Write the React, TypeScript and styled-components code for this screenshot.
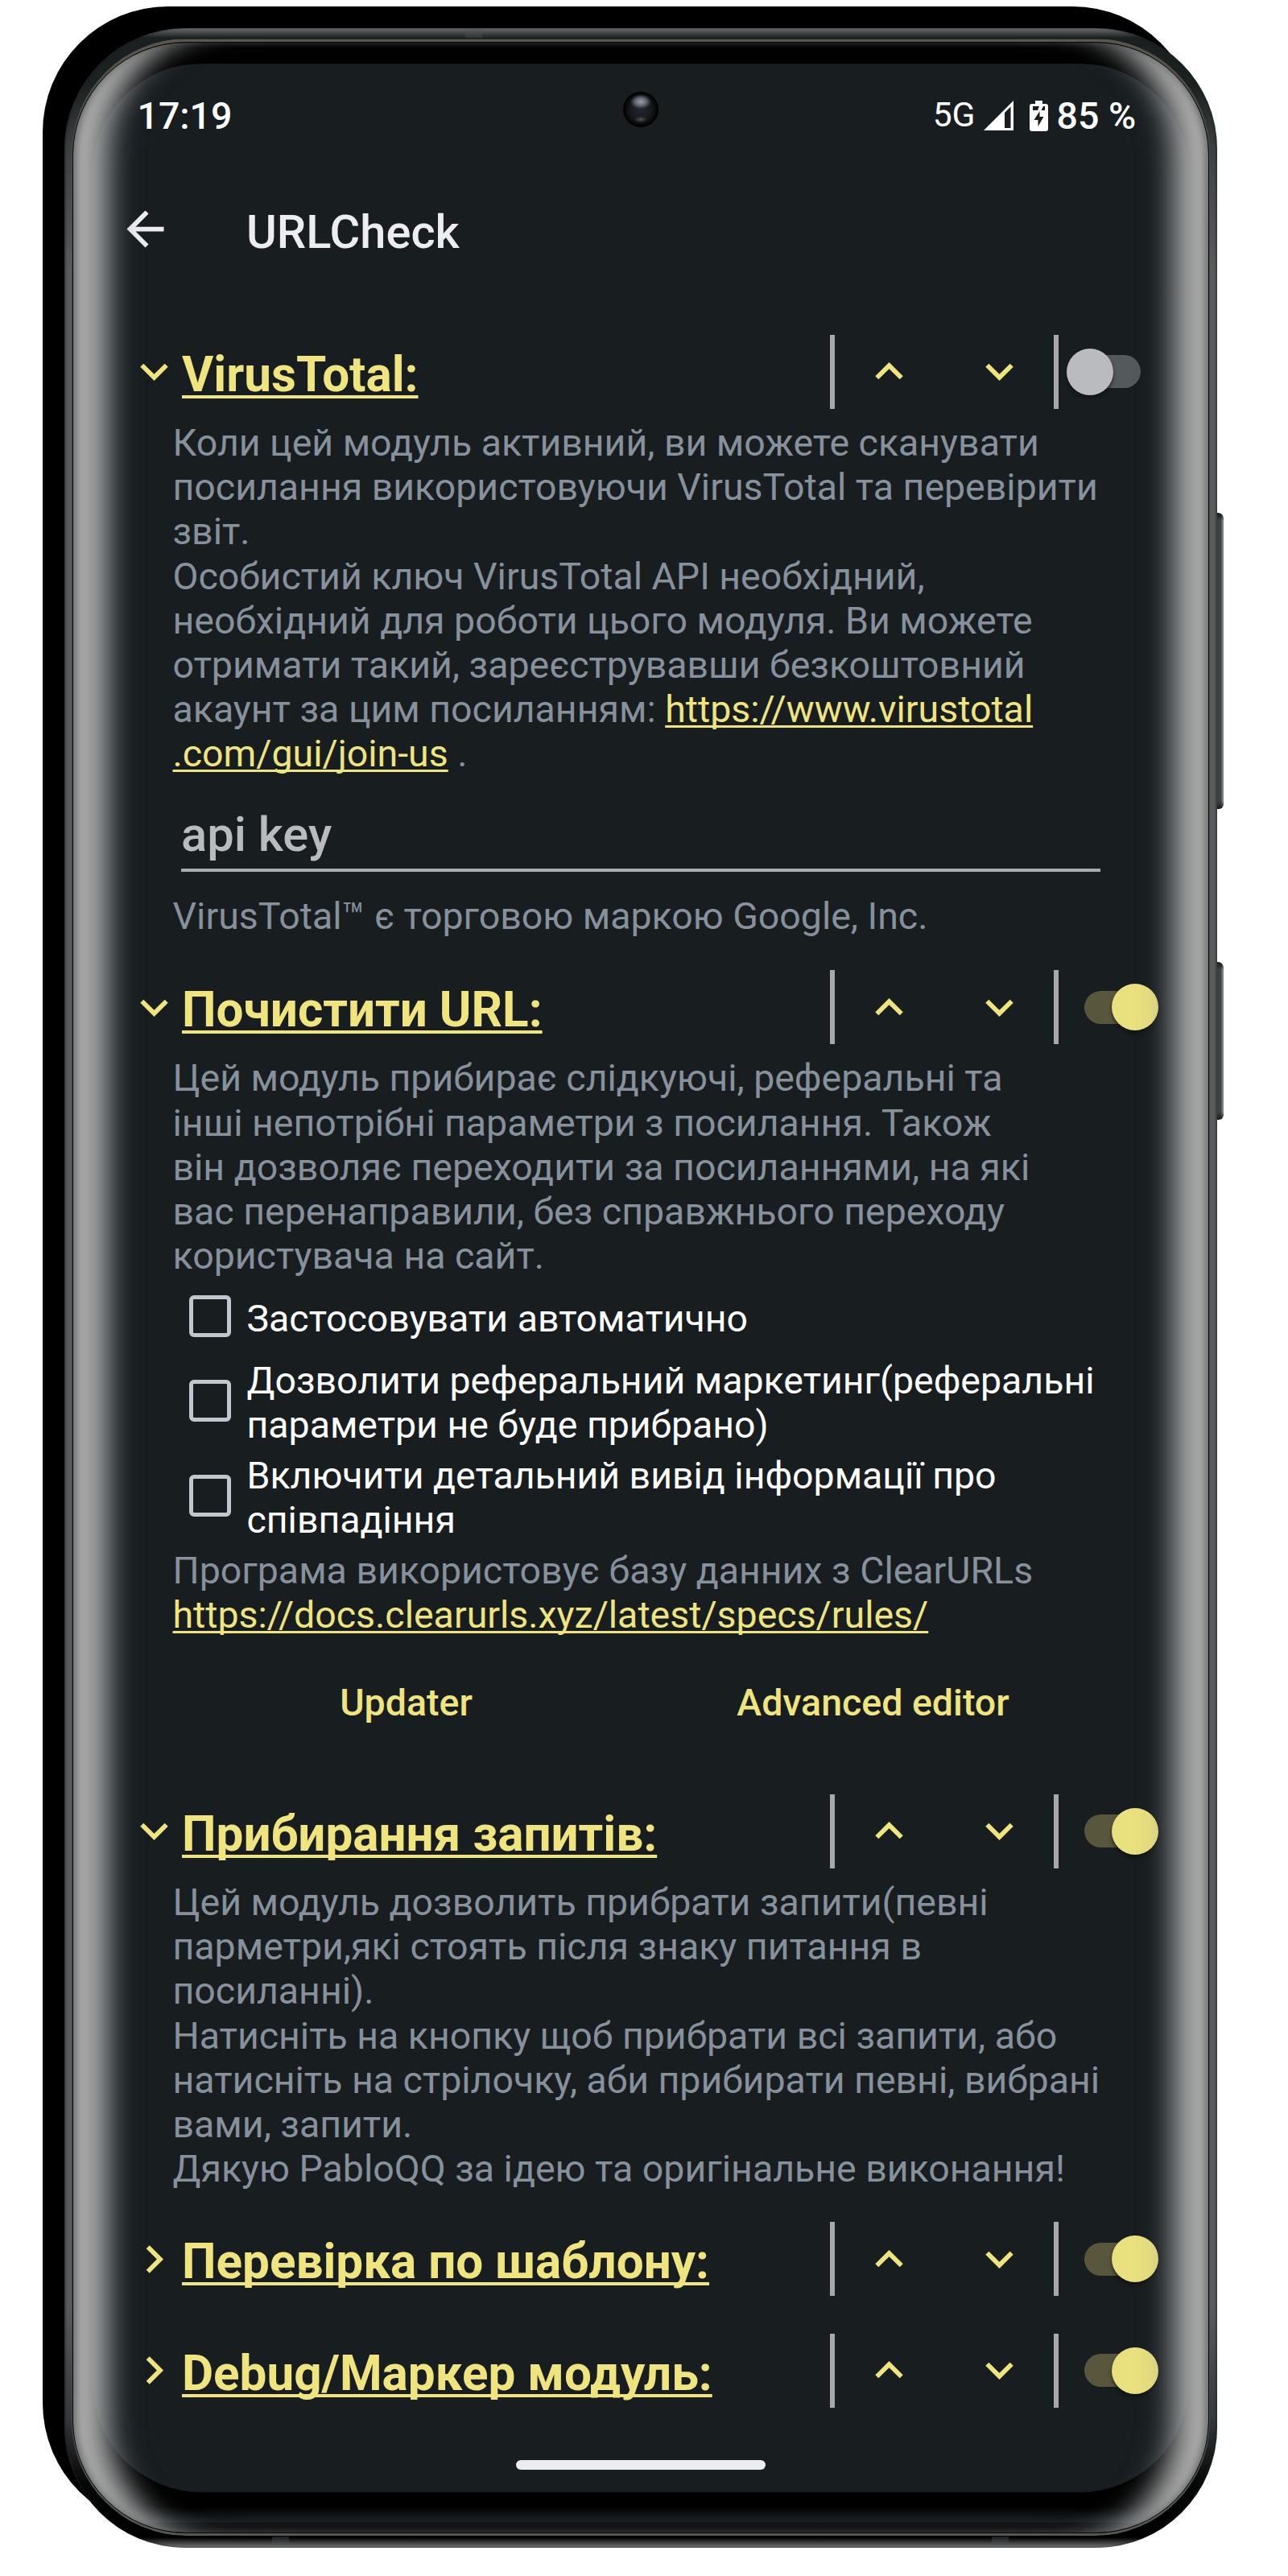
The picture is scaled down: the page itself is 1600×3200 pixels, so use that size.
import React from "react";
import styled, { createGlobalStyle } from "styled-components";

const GlobalStyle = createGlobalStyle`
  * { box-sizing: border-box; }
  html, body { margin: 0; padding: 0; background: #ffffff; }
  body { font-family: Roboto, "Liberation Sans", sans-serif; }
`;

const accent = "#efe47e";
const surface = "#181d20";
const muted = "#87919b";

/* ---------- device ---------- */

const Stage = styled.main`
  position: relative;
  width: 1600px;
  height: 3200px;
  overflow: hidden;
  padding: 35px 0 0 80px;
  background: #ffffff;
`;

const BackPlate = styled.div`
  position: absolute;
  left: 52.5px;
  top: 8px;
  width: 1435px;
  height: 3133px;
  border-radius: 156px;
  background: #000000;
`;

const SideButton = styled.div<{ $top: number; $length: number }>`
  position: absolute;
  left: 1508px;
  top: ${(p) => p.$top}px;
  width: 12px;
  height: ${(p) => p.$length}px;
  border-radius: 0 7px 6px 0;
  background: linear-gradient(180deg, #15191a 0, transparent 10px, transparent calc(100% - 10px), #15191a 100%),
    linear-gradient(90deg, #3d4241 0, #3f4443 9px, #7b7f80 10px, #808486 12px);
`;

const Frame = styled.div`
  position: relative;
  width: 1431.7px;
  height: 3129.5px;
  padding: 12.5px 9px 15px;
  border-radius: 150px;
  background: linear-gradient(
    180deg,
    #6b6e70 0,
    #1a1f20 12px,
    #1b2021 70px,
    #3d4041 150px,
    #5a5b5c 300px,
    #5a5b5c calc(100% - 300px),
    #34383a calc(100% - 160px),
    #050606 calc(100% - 80px),
    #000000 calc(100% - 13px),
    #777777 100%
  );
  box-shadow: inset 2px 0 2px rgba(30, 32, 33, 0.5), inset -2px 0 2px rgba(30, 32, 33, 0.5);
`;

const Antenna = styled.span<{ $left: number; $bottom?: boolean }>`
  position: absolute;
  left: ${(p) => p.$left}px;
  ${(p) => (p.$bottom ? "bottom: 3px;" : "top: 1px;")}
  width: 21px;
  height: 11px;
  background: rgba(78, 80, 82, 0.4);
`;

const Rim = styled.div`
  height: 100%;
  padding: 4px 1px 3px;
  border-radius: 143px;
  background: linear-gradient(180deg, #1a1b1b 0, #5a574f 1.5px, #504e47 60px, #4a4c4c 300px, #4a4c4c calc(100% - 200px), #565852 100%);
`;

const Glass = styled.div`
  position: relative;
  display: flex;
  flex-direction: column;
  height: 100%;
  padding: 26px 24px 0;
  border: 1.5px solid #050606;
  border-radius: 141px;
  overflow: hidden;
  background: #000000;
`;

const EdgeGlow = styled.div`
  position: absolute;
  inset: 0;
  border-radius: 139px;
  pointer-events: none;
  box-shadow: inset 7px 0 10px -3px rgba(70, 72, 74, 0.65), inset -7px 0 10px -3px rgba(70, 72, 74, 0.65),
    inset 67px 0 34px -27px #adadad, inset -67px 0 34px -27px #adadad,
    inset 78px 0 40px -27px rgba(110, 120, 126, 0.3), inset -78px 0 40px -27px rgba(110, 120, 126, 0.3);
`;

const Camera = styled.div`
  position: absolute;
  left: 672.5px;
  top: 51px;
  width: 64px;
  height: 64px;
  padding: 10px;
  border-radius: 50%;
  background: #1a1d1e;
`;

const Lens = styled.div`
  width: 44px;
  height: 44px;
  border-radius: 50%;
  background: radial-gradient(ellipse 13px 9px at 50% 28%, #9a9fa8 0, #666b73 50%, transparent 100%),
    radial-gradient(ellipse 8px 4px at 50% 78%, #50534a 0, transparent 100%),
    radial-gradient(circle at 50% 50%, #22272c 0, #16191c 45%, #000000 68%);
`;

const Chin = styled.div`
  flex: 1;
  margin: 0 -24px;
  background: linear-gradient(180deg, #000000 0, #000000 18px, #1b2125 37px, #121212 38px, #131313 100%);
`;

/* ---------- screen ---------- */

const Screen = styled.div`
  display: flex;
  flex-direction: column;
  height: 3017.5px;
  border-radius: 136px;
  overflow: hidden;
  background: ${surface};
`;

const StatusBar = styled.header`
  display: flex;
  align-items: center;
  justify-content: space-between;
  height: 130px;
  padding: 0 65.5px 0 55.5px;
  color: #ffffff;
  font-size: 46.5px;
  font-weight: 500;
  line-height: 55px;
`;

const StatusText = styled.span`
  padding-top: 2px;
`;

const StatusIcons = styled.div`
  display: flex;
  align-items: center;
`;

const Network = styled.span`
  margin-right: 10px;
  padding-bottom: 2px;
  font-size: 42.5px;
  font-weight: 400;
`;

const AppBar = styled.div`
  display: flex;
  align-items: center;
  height: 158px;
  padding: 0 0 5px 30.5px;
  border-bottom: 1.5px solid #1b1a1c;
`;

const AppTitle = styled.h1`
  margin: 0 0 0 91.5px;
  padding-top: 6px;
  color: #ececf1;
  font-size: 57.8px;
  font-weight: 500;
  line-height: 68px;
`;

const List = styled.div`
  flex: 1;
  padding: 35.3px 97px 0 99.5px;
`;

const Module = styled.section<{ $gap?: number }>`
  margin-top: ${(p) => p.$gap ?? 0}px;
`;

const ModuleHeader = styled.div`
  display: flex;
  align-items: center;
  height: 120px;
  margin: 0 -97px 0 -57.5px;
`;

const ModuleTitle = styled.h2`
  flex: none;
  width: 804.7px;
  margin: 0;
  padding-top: 8px;
  color: ${accent};
  font-size: 60.2px;
  font-weight: 700;
  line-height: 70px;
  white-space: nowrap;
  text-decoration: underline;
  text-decoration-thickness: 3.5px;
  text-decoration-skip-ink: none;
  text-underline-offset: 5px;
`;

const Divider = styled.span`
  flex: none;
  width: 6.2px;
  height: 92px;
  background: #a9a9a9;
`;

const IconButton = styled.button`
  display: flex;
  flex: none;
  align-items: center;
  justify-content: center;
  width: 136.2px;
  height: 120px;
  padding: 0;
  border: 0;
  background: none;
`;

const Switch = styled.span<{ $on: boolean }>`
  display: flex;
  flex: none;
  align-items: center;
  justify-content: ${(p) => (p.$on ? "flex-end" : "flex-start")};
  width: 92px;
  height: 41px;
  margin-left: ${(p) => (p.$on ? 31.3 : 9.1)}px;
  border-radius: 21px;
  background: ${(p) => (p.$on ? "#58573d" : "#54595c")};
`;

const Thumb = styled.span<{ $on: boolean }>`
  flex: none;
  width: 58px;
  height: 58px;
  border-radius: 50%;
  background: ${(p) => (p.$on ? "#e9e07e" : "#b9bbbf")};
  box-shadow: 0 3px 4px rgba(16, 16, 16, 0.7);
`;

const Text = styled.p<{ $gap?: number }>`
  margin: ${(p) => p.$gap ?? 0}px 0 -1.2px;
  padding-top: 1.2px;
  color: ${muted};
  font-size: 46.47px;
  line-height: 55.2px;
  white-space: nowrap;
`;

const Link = styled.a`
  color: ${accent};
  text-decoration: underline;
  text-decoration-thickness: 2.6px;
  text-decoration-skip-ink: none;
  text-underline-offset: 4px;
`;

const Field = styled.div`
  width: 1141.5px;
  height: 80.7px;
  margin: 39px 0 0 10.5px;
  border-bottom: 4px solid #a9abae;
  color: #b9bbbf;
  font-size: 59.7px;
  font-weight: 500;
  line-height: 70px;
`;

const Options = styled.div`
  margin: 4.4px 0 3.3px 20px;
`;

const Option = styled.label<{ $height: number }>`
  display: flex;
  align-items: center;
  height: ${(p) => p.$height}px;
  color: #ffffff;
  font-size: 46.45px;
  line-height: 55.2px;
  white-space: nowrap;
`;

const OptionText = styled.span`
  padding-top: 1.6px;
`;

const Box = styled.span`
  flex: none;
  width: 52px;
  height: 52px;
  margin: 0 20px 6px 0;
  border: 5.8px solid #c3c6cc;
  border-radius: 6px;
`;

const Actions = styled.div`
  display: grid;
  grid-template-columns: 1fr 1fr;
  width: 1160px;
  height: 138px;
  margin-top: 12.6px;
`;

const Action = styled.button`
  padding: 0;
  border: 0;
  background: none;
  color: ${accent};
  font-family: inherit;
  font-size: 46.5px;
  font-weight: 500;
`;

const NavBar = styled.div`
  display: flex;
  justify-content: center;
  height: 40.5px;
`;

const NavPill = styled.span`
  width: 310.5px;
  height: 12px;
  border-radius: 6px;
  background: #ececf1;
`;

/* ---------- icons ---------- */

const iconPaths = {
  up: "M12 8l-6 6 1.41 1.41L12 10.83l4.59 4.58L18 14z",
  down: "M16.59 8.59L12 13.17 7.41 8.59 6 10l6 6 6-6z",
  right: "M10 6L8.59 7.41 13.17 12l-4.58 4.59L10 18l6-6z",
  back: "M20 11H7.83l5.59-5.59L12 4l-8 8 8 8 1.41-1.41L7.83 13H20v-2z",
};

const Glyph = styled.svg`
  flex: none;
  width: 69px;
  height: 69px;
`;

const Signal = styled.svg`
  flex: none;
  margin-right: 20px;
`;

const Battery = styled.svg`
  flex: none;
  margin-right: 11px;
`;

function Icon({ name, color = accent }: { name: keyof typeof iconPaths; color?: string }) {
  return (
    <Glyph viewBox="0 0 24 24" fill={color}>
      <path d={iconPaths[name]} />
    </Glyph>
  );
}

function SignalIcon() {
  return (
    <Signal width="37" height="37" viewBox="0 0 37 37">
      <path fillRule="evenodd" fill="#fff" d="M37 0V37H0ZM26 15V34H33.5V7.5Z" />
    </Signal>
  );
}

function BatteryIcon() {
  return (
    <Battery width="23" height="38" viewBox="0 0 23 38">
      <path
        fillRule="evenodd"
        fill="#fff"
        d="M7 0H16V4H20Q23 4 23 7V35Q23 38 20 38H3Q0 38 0 35V7Q0 4 3 4H7ZM4 7V12H10L12 7ZM17 7L14.500 12H19V7ZM12.500 13L5.500 24H10.500V32L17.500 20H12.500Z"
      />
    </Battery>
  );
}

/* ---------- parts ---------- */

function Header({ title, open, on }: { title: string; open: boolean; on: boolean }) {
  return (
    <ModuleHeader>
      <Icon name={open ? "down" : "right"} />
      <ModuleTitle>{title}</ModuleTitle>
      <Divider />
      <IconButton aria-label="Вгору">
        <Icon name="up" />
      </IconButton>
      <IconButton aria-label="Вниз">
        <Icon name="down" />
      </IconButton>
      <Divider />
      <Switch $on={on}>
        <Thumb $on={on} />
      </Switch>
    </ModuleHeader>
  );
}

function Lines({ lines }: { lines: string[] }) {
  return (
    <>
      {lines.map((line, i) => (
        <React.Fragment key={i}>
          {i > 0 && <br />}
          {line}
        </React.Fragment>
      ))}
    </>
  );
}

export default function App() {
  return (
    <Stage>
      <GlobalStyle />
      <BackPlate />
      <SideButton $top={637} $length={368} />
      <SideButton $top={1195} $length={196} />
      <Frame>
        <Antenna $left={498} />
        <Antenna $left={258} $bottom />
        <Antenna $left={1152} $bottom />
        <Rim>
          <Glass>
            <Screen>
              <StatusBar>
                <StatusText>17:19</StatusText>
                <StatusIcons>
                  <Network>5G</Network>
                  <SignalIcon />
                  <BatteryIcon />
                  <StatusText>85 %</StatusText>
                </StatusIcons>
              </StatusBar>
              <AppBar>
                <Icon name="back" color="#ececf1" />
                <AppTitle>URLCheck</AppTitle>
              </AppBar>
              <List>
                <Module>
                  <Header title="VirusTotal:" open on={false} />
                  <Text>
                    <Lines
                      lines={[
                        "Коли цей модуль активний, ви можете сканувати",
                        "посилання використовуючи VirusTotal та перевірити",
                        "звіт.",
                        "Особистий ключ VirusTotal API необхідний,",
                        "необхідний для роботи цього модуля. Ви можете",
                        "отримати такий, зареєструвавши безкоштовний",
                        "акаунт за цим посиланням: ",
                      ]}
                    />
                    <Link>
                      https://www.virustotal
                      <br />
                      .com/gui/join-us
                    </Link>{" "}
                    .
                  </Text>
                  <Field>api key</Field>
                  <Text $gap={27}>VirusTotal™ є торговою маркою Google, Inc.</Text>
                </Module>
                <Module $gap={25.8}>
                  <Header title="Почистити URL:" open on />
                  <Text>
                    <Lines
                      lines={[
                        "Цей модуль прибирає слідкуючі, реферальні та",
                        "інші непотрібні параметри з посилання. Також",
                        "він дозволяє переходити за посиланнями, на які",
                        "вас перенаправили, без справжнього переходу",
                        "користувача на сайт.",
                      ]}
                    />
                  </Text>
                  <Options>
                    <Option $height={92}>
                      <Box />
                      <OptionText>Застосовувати автоматично</OptionText>
                    </Option>
                    <Option $height={118}>
                      <Box />
                      <OptionText>
                        <Lines lines={["Дозволити реферальний маркетинг(реферальні", "параметри не буде прибрано)"]} />
                      </OptionText>
                    </Option>
                    <Option $height={118}>
                      <Box />
                      <OptionText>
                        <Lines lines={["Включити детальний вивід інформації про", "співпадіння"]} />
                      </OptionText>
                    </Option>
                  </Options>
                  <Text>
                    Програма використовує базу данних з ClearURLs
                    <br />
                    <Link>https://docs.clearurls.xyz/latest/specs/rules/</Link>
                  </Text>
                  <Actions>
                    <Action>Updater</Action>
                    <Action>Advanced editor</Action>
                  </Actions>
                </Module>
                <Module $gap={31}>
                  <Header title="Прибирання запитів:" open on />
                  <Text>
                    <Lines
                      lines={[
                        "Цей модуль дозволить прибрати запити(певні",
                        "парметри,які стоять після знаку питання в",
                        "посиланні).",
                        "Натисніть на кнопку щоб прибрати всі запити, або",
                        "натисніть на стрілочку, аби прибирати певні, вибрані",
                        "вами, запити.",
                        "Дякую PabloQQ за ідею та оригінальне виконання!",
                      ]}
                    />
                  </Text>
                </Module>
                <Module $gap={25}>
                  <Header title="Перевірка по шаблону:" open={false} on />
                </Module>
                <Module $gap={18.3}>
                  <Header title="Debug/Маркер модуль:" open={false} on />
                </Module>
              </List>
              <NavBar>
                <NavPill />
              </NavBar>
            </Screen>
            <Chin />
            <Camera>
              <Lens />
            </Camera>
            <EdgeGlow />
          </Glass>
        </Rim>
      </Frame>
    </Stage>
  );
}
